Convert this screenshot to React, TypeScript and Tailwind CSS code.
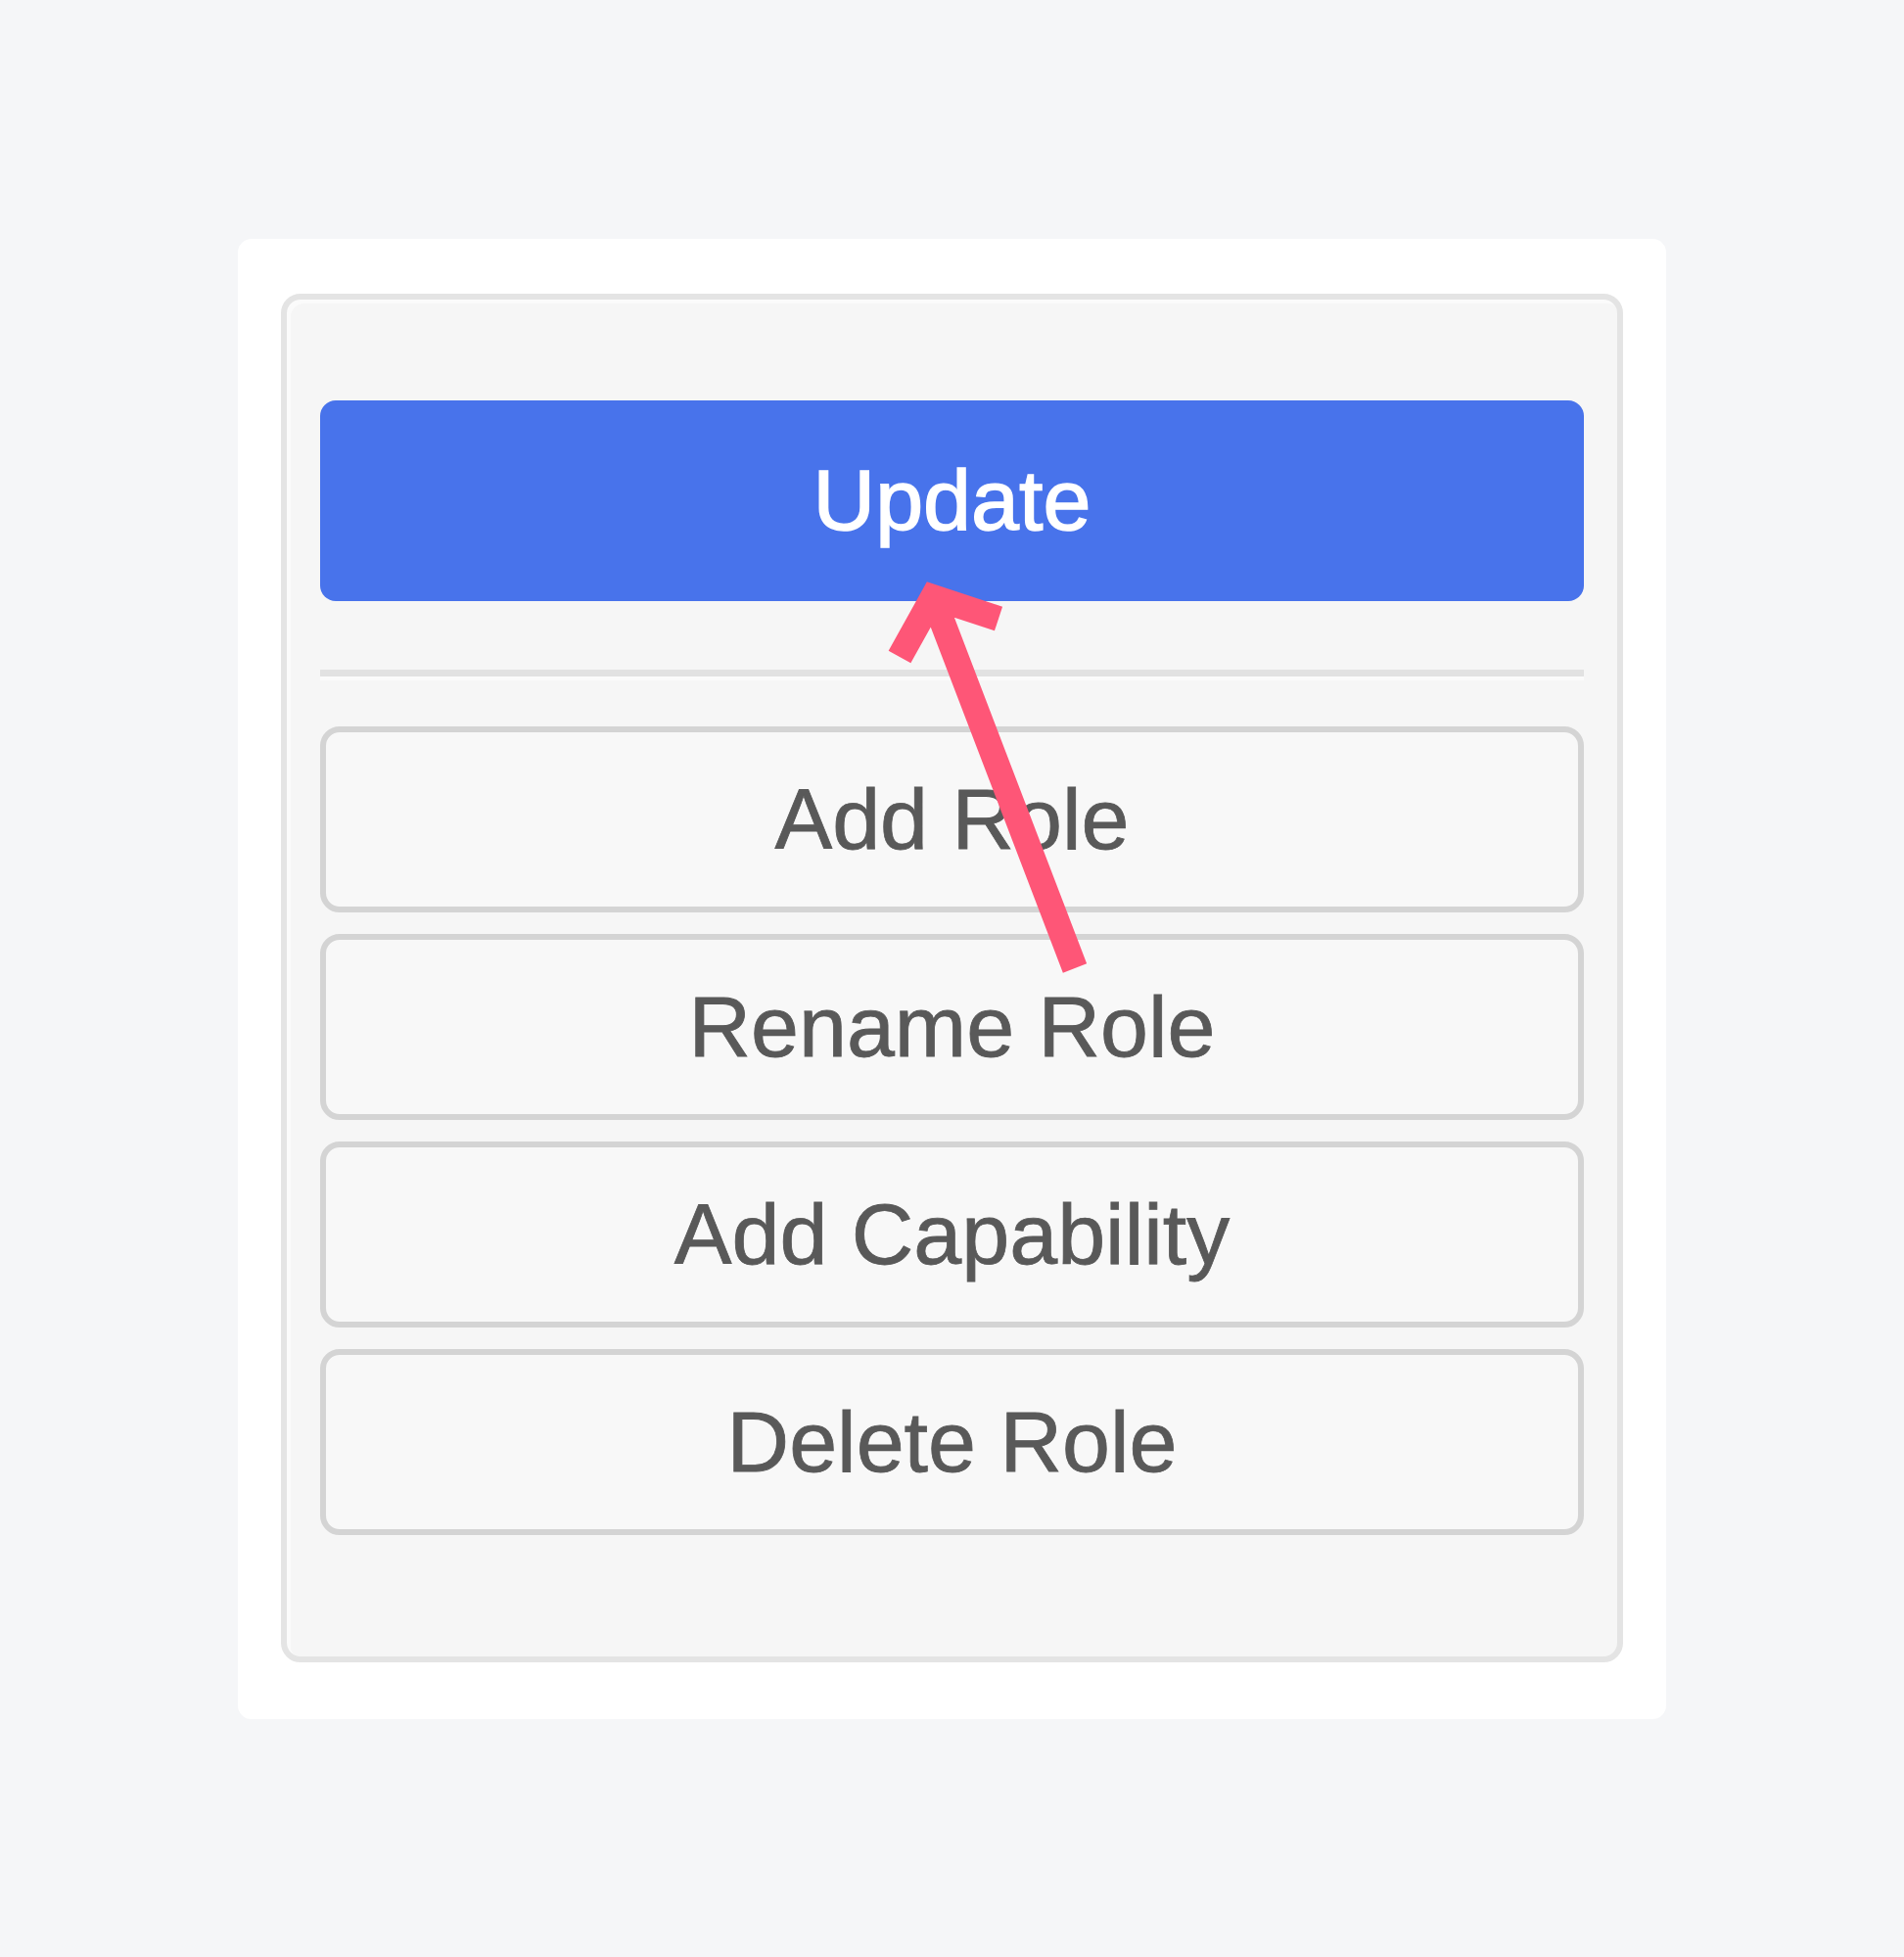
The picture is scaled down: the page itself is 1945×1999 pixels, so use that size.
const actions = ["Add Role", "Rename Role", "Add Capability", "Delete Role"];

const Arrow = () => (
  <svg
    className="pointer-events-none absolute left-0 top-0"
    width="1945"
    height="1999"
    viewBox="0 0 1945 1999"
  >
    <path
      d="M1098 989 L953 610 M919 671 L953 610 L1020 632"
      fill="none"
      stroke="#fe5677"
      strokeWidth="26"
      strokeLinejoin="miter"
      strokeLinecap="butt"
    />
  </svg>
);

export default function App() {
  return (
    <div
      className="relative flex min-h-screen items-center justify-center bg-[#f5f6f8]"
      style={{ fontFamily: '"Liberation Sans", Arial, sans-serif' }}
    >
      <div className="w-[1459px] rounded-[14px] bg-white px-[44px] pt-[56px] pb-[58px]">
        <div className="rounded-[20px] border-[6px] border-[#e4e4e4] bg-[#f6f6f6] px-[34px] pt-[103px] pb-[124px] shadow-[inset_4px_4px_0_#fbfbfb]">
          <button className="flex h-[205px] w-full items-center justify-center rounded-[16px] bg-[#4873eb] text-[88px] text-white [-webkit-text-stroke:1.5px_#ffffff]">
            Update
          </button>
          <div className="mt-[70px] h-[11px] border-t-[7px] border-b-[4px] border-t-[#e2e2e2] border-b-[#fbfbfb]" />
          <div className="mt-[47px] flex flex-col gap-[22px]">
            {actions.map((label) => (
              <button
                key={label}
                className="flex h-[190px] w-full items-center justify-center rounded-[20px] border-[6px] border-[#d4d4d4] bg-[#f8f8f8] text-[88px] text-[#595959] [-webkit-text-stroke:0.8px_#595959]"
              >
                {label}
              </button>
            ))}
          </div>
        </div>
      </div>
      <Arrow />
    </div>
  );
}
